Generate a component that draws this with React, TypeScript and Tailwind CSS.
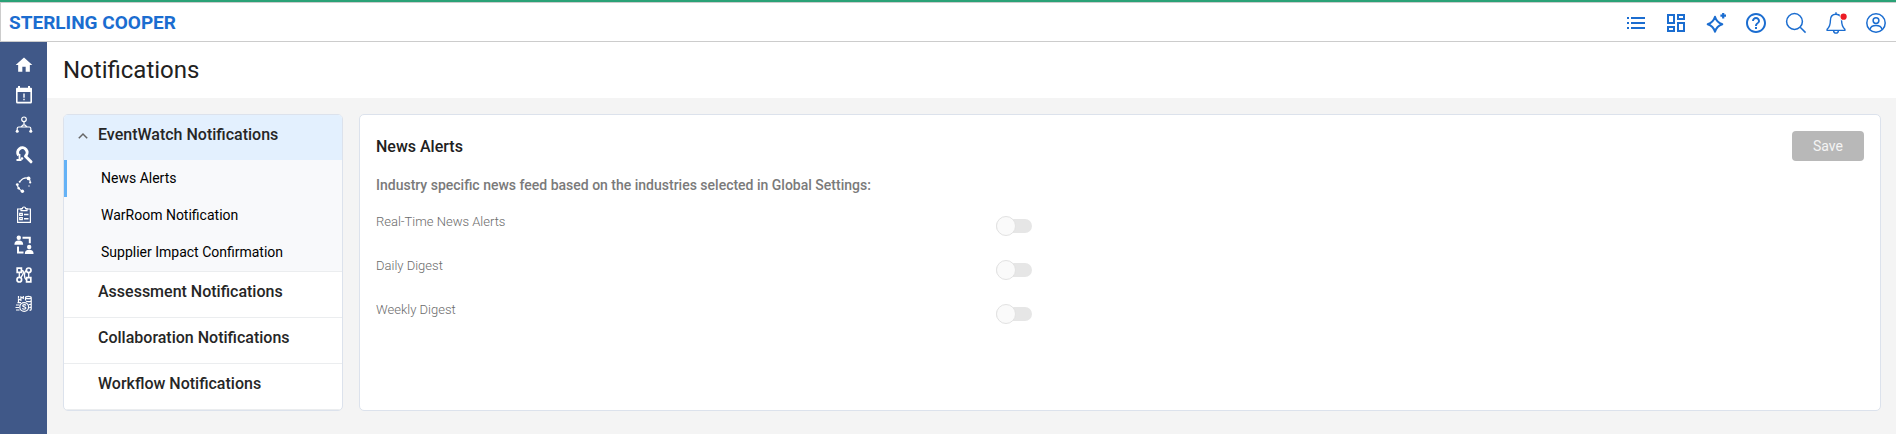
import type { ReactNode } from "react";
import { MdHelpOutline, MdHome, MdOutlineDashboard } from "react-icons/md";

const topLinks: { label: string; icon: ReactNode }[] = [
  {
    label: "Lists",
    icon: (
      <svg viewBox="0 0 24 24" className="size-6" fill="currentColor">
        <path d="M3 6h2v2H3zM7 6h14v2H7zM3 11h2v2H3zM7 11h14v2H7zM3 16h2v2H3zM7 16h14v2H7z" />
      </svg>
    ),
  },
  { label: "Dashboard", icon: <MdOutlineDashboard className="size-6" /> },
  {
    label: "Assistant",
    icon: (
      <svg viewBox="0 0 24 24" className="size-6" fill="none" stroke="currentColor" strokeWidth="2" strokeLinejoin="round">
        <path d="M11 5.800c1.300 4.400 3 6.100 7.300 7.500-4.300 1.400-6 3.100-7.300 7.500-1.300-4.400-3-6.100-7.300-7.500C8 11.900 9.700 10.200 11 5.800z" />
        <path d="M19.200 1.900v5.600M16.400 4.700h5.600" strokeWidth="2.200" />
      </svg>
    ),
  },
  { label: "Help", icon: <MdHelpOutline className="size-6" /> },
  {
    label: "Search",
    icon: (
      <svg viewBox="0 0 24 24" className="size-6" fill="none" stroke="currentColor" strokeWidth="1.5">
        <circle cx="10.5" cy="10.5" r="7.900" />
        <path d="M16.200 16.200l5.400 5.400" />
      </svg>
    ),
  },
  {
    label: "Alerts",
    icon: (
      <svg viewBox="0 0 24 24" className="size-6" fill="none" stroke="currentColor" strokeWidth="1.4" strokeLinejoin="round">
        <path d="M12 3.200c-3.600 0-5.600 2.700-5.600 6.200 0 4.600-.8 6.600-3.300 8.800v1.200h17.800v-1.200c-2.500-2.200-3.300-4.200-3.300-8.800 0-3.500-2-6.200-5.600-6.200z" />
        <path d="M12 1.200v2M9.600 19.600c.1 1.500 1.100 2.500 2.400 2.500s2.300-1 2.400-2.500" />
        <circle cx="19.600" cy="5.700" r="4" fill="#fff" stroke="none" />
        <circle cx="19.600" cy="5.700" r="3.100" fill="#ec1c24" stroke="none" />
      </svg>
    ),
  },
  {
    label: "Account",
    icon: (
      <svg viewBox="0 0 24 24" className="size-6" fill="none" stroke="currentColor" strokeWidth="1.5">
        <circle cx="12" cy="12" r="9.200" />
        <circle cx="12" cy="9.600" r="2.900" />
        <path d="M6 18.500c.6-2.600 2.800-3.900 6-3.900s5.400 1.300 6 3.900" />
      </svg>
    ),
  },
];

const sideLinks: { label: string; icon: ReactNode }[] = [
  { label: "Home", icon: <MdHome className="size-5" /> },
  {
    label: "Events",
    icon: (
      <svg viewBox="0 0 20 20" className="size-5" fill="currentColor" fillRule="evenodd">
        <path d="M4 1h2v1.700h8V1h2v1.700h1a1 1 0 0 1 1 1V17a1.500 1.500 0 0 1-1.500 1.500h-13A1.500 1.500 0 0 1 2 17V3.700a1 1 0 0 1 1-1h1zM3.600 7v9.800h12.800V7zM9.300 8.500h1.400v4.200H9.300zM9.300 13.800h1.400v1.400H9.300z" />
      </svg>
    ),
  },
  {
    label: "Supply map",
    icon: (
      <svg viewBox="0 0 20 20" className="size-5" fill="none" stroke="currentColor" strokeWidth="1.200">
        <circle cx="10" cy="4.300" r="2.300" />
        <path d="M10 6.600v3M3.200 15.800v-2.300c0-1 .5-1.500 1.600-1.500h1.700c1.200 0 1.600-2.200 3.500-2.200s2.300 2.200 3.500 2.200h1.700c1.100 0 1.600.5 1.600 1.500v2.300M6.500 12h7" />
        <g fill="currentColor" stroke="none">
          <circle cx="3.200" cy="16.300" r="1.500" />
          <circle cx="16.800" cy="16.300" r="1.500" />
        </g>
      </svg>
    ),
  },
  {
    label: "Discovery",
    icon: (
      <svg viewBox="0 0 20 20" className="size-5" fill="none" stroke="currentColor">
        <path d="M4.600 10.300A4.700 4.700 0 1 1 11.500 11" strokeWidth="3" />
        <path d="M11.500 11.200l5.500 5.600" strokeWidth="3" strokeLinecap="round" />
        <path d="M5.500 9v5.500M2.500 15h5" strokeWidth="1.800" />
        <circle cx="8" cy="13.500" r="1.300" fill="currentColor" stroke="none" />
      </svg>
    ),
  },
  {
    label: "Resiliency",
    icon: (
      <svg viewBox="0 0 20 20" className="size-5" fill="none" stroke="currentColor" strokeWidth="1.200">
        <path d="M6 6.500C8 3.800 11.500 2.300 14.500 3.300M15.300 4c.8 1.300 1 2.300.9 3.500M3.400 9.500c.1 1.400.5 2.500 1.200 3.600M5 13.500c.8 1.100 1.700 1.900 3 2.500" />
        <g fill="currentColor" stroke="none">
          <circle cx="5.700" cy="6.800" r="1" />
          <circle cx="14.600" cy="3.400" r="1.900" />
          <circle cx="16.200" cy="7.500" r="1.100" />
          <circle cx="3.300" cy="9.600" r="1.400" />
          <circle cx="4.700" cy="13.300" r="1.200" />
          <circle cx="8.400" cy="16.200" r="1.700" />
          <circle cx="15" cy="11" r=".7" />
        </g>
      </svg>
    ),
  },
  {
    label: "Assessments",
    icon: (
      <svg viewBox="0 0 20 20" className="size-5" fill="none" stroke="currentColor" strokeWidth="1.200">
        <path d="M7 4H3.600v13.400h12.800V4H13" />
        <path d="M7 3.600h1.400a1.600 1.600 0 0 1 3.200 0H13v2H7z" />
        <path d="M5.700 8.400h2.600v2H5.700zM5.700 12.700h2.600v2H5.700z" />
        <path d="M10 9.400h4.500M10 13.700h4.500" strokeWidth="1.500" />
      </svg>
    ),
  },
  {
    label: "Collaboration",
    icon: (
      <svg viewBox="0 0 20 20" className="size-5" fill="currentColor">
        <circle cx="4.800" cy="2.700" r="2.200" />
        <path d="M.4 9.800C.4 7 2 5.600 4.800 5.600S9.200 7 9.200 9.800z" />
        <circle cx="15.200" cy="12" r="2.200" />
        <path d="M10.800 19c0-2.800 1.600-4.200 4.400-4.200s4.400 1.400 4.400 4.200z" />
        <path d="M8.500 2.800h7.300v5.500M4 11.500v6h5.500" fill="none" stroke="currentColor" strokeWidth="2" />
      </svg>
    ),
  },
  {
    label: "Workflows",
    icon: (
      <svg viewBox="0 0 20 20" className="size-5" fill="none" stroke="currentColor" strokeWidth="1.700">
        <path d="M3.200 3.200h4.200v4.200H3.200z" />
        <circle cx="14.700" cy="5.300" r="2.300" />
        <circle cx="5.300" cy="14.700" r="2.300" />
        <path d="M12.600 12.600h4.200v4.200h-4.200z" />
        <path d="M5.300 7.400v5M14.700 7.600v5M7.400 5.500c3 0 2 3 1 4.700l-1.600 2.500M12.400 5.700c-3 1.500-2.200 8.500.2 9" strokeWidth="1.300" />
      </svg>
    ),
  },
  {
    label: "Spend",
    icon: (
      <svg viewBox="0 0 20 20" className="size-5" fill="none" stroke="currentColor" strokeWidth="1.200">
        <path d="M4.500 7.500V4l2.400 1.300V2l2.400 1.300V1M4.500 3V1M11.500 2.500c0-.8 1.200-1.200 2.800-1.200s2.900.4 2.900 1.200v11.700c0 .6-.6 1-1.600 1.200M11.500 2.500v3M11.500 2.500c0 .8 1.200 1.200 2.800 1.200s2.900-.4 2.900-1.200M12 6.300c.6.300 1.400.4 2.300.4 1.600 0 2.900-.4 2.900-1.200M14.600 9.700c1.500 0 2.600-.4 2.600-1.100M15.200 12.600c1.200-.1 2-.5 2-1.100M3.500 7.700H7M2 10h3.500M1.500 12.500H5M2 15h3.500" />
        <circle cx="10.200" cy="12" r="4.400" />
        <path d="M11.900 10.500c-.3-.6-.9-.8-1.700-.8-.9 0-1.500.4-1.500 1 0 1.700 3.200.7 3.200 2.400 0 .7-.7 1.100-1.700 1.100-.8 0-1.500-.3-1.800-1" />
      </svg>
    ),
  },
];

const eventWatchItems = ["News Alerts", "WarRoom Notification", "Supplier Impact Confirmation"];
const otherGroups = ["Assessment Notifications", "Collaboration Notifications", "Workflow Notifications"];
const feeds = [
  { id: "real-time", label: "Real-Time News Alerts" },
  { id: "daily", label: "Daily Digest" },
  { id: "weekly", label: "Weekly Digest" },
];

function Header() {
  return (
    <header className="border-t-2 border-[#2aa277]">
      <div className="flex h-10 items-center justify-between border-y border-l border-[#cccccc] bg-white px-2 pt-[2px]">
        <a href="#home" className="text-[19px] font-bold text-[#1b6dd0]">
          STERLING COOPER
        </a>
        <nav aria-label="Tools" className="flex gap-4 text-[#1b6dd0]">
          {topLinks.map((link) => (
            <button key={link.label} type="button" aria-label={link.label}>
              {link.icon}
            </button>
          ))}
        </nav>
      </div>
    </header>
  );
}

function Sidebar() {
  return (
    <nav aria-label="Main" className="flex w-[47px] shrink-0 flex-col items-center gap-[10px] bg-[#405888] pt-[13px] text-white">
      {sideLinks.map((link) => (
        <a key={link.label} href="#section" aria-label={link.label}>
          {link.icon}
        </a>
      ))}
    </nav>
  );
}

function NotificationMenu() {
  return (
    <nav
      aria-label="Notification types"
      className="w-[280px] shrink-0 overflow-hidden rounded-[5px] border border-[#dce2ec] bg-white"
    >
      <div className="border-b border-[#ebedef] bg-[#f8f9fb]">
        <button
          type="button"
          aria-expanded="true"
          className="flex h-[45px] w-full items-start bg-[#e3f0fe] pt-2 pl-[14px] text-left text-base font-medium text-[#262626]"
        >
          <svg viewBox="0 0 10 24" className="mr-[10px] h-6 w-[10px]" fill="none" stroke="#666" strokeWidth="1.500">
            <path d="M.8 15.200L5 11l4.200 4.200" />
          </svg>
          EventWatch Notifications
        </button>
        <ul>
          {eventWatchItems.map((item, index) => (
            <li key={item}>
              <a
                href="#item"
                aria-current={index === 0 ? "page" : undefined}
                className={`flex h-[37px] items-center border-l-[3px] pb-[2px] pl-[34px] text-sm text-black ${
                  index === 0 ? "border-[#64b2f6]" : "border-transparent"
                }`}
              >
                {item}
              </a>
            </li>
          ))}
        </ul>
      </div>
      {otherGroups.map((group) => (
        <button
          key={group}
          type="button"
          className="flex h-[46px] w-full items-start border-b border-[#ebedef] pt-2 pl-[34px] text-left text-base font-medium text-[#262626]"
        >
          {group}
        </button>
      ))}
    </nav>
  );
}

function NewsAlerts() {
  return (
    <section className="min-w-0 flex-1 rounded-[5px] border border-[#dce2ec] bg-white p-4">
      <div className="flex items-center justify-between">
        <h2 className="pt-[2px] text-base font-medium text-[#212121]">News Alerts</h2>
        <button type="button" disabled className="h-[30px] w-[72px] rounded-[4px] bg-[#b8b8b8] text-sm text-[#f4f4f4]">
          Save
        </button>
      </div>
      <p className="mt-[14px] text-sm font-medium text-[#7a7a7a]">
        Industry specific news feed based on the industries selected in Global Settings:
      </p>
      <div className="mt-4">
        {feeds.map((feed) => (
          <div key={feed.id} className="grid h-11 grid-cols-12 items-start">
            <label htmlFor={feed.id} className="col-span-5 text-[13px] leading-[22px] font-light text-[#6b6b6b]">
              {feed.label}
            </label>
            <input
              id={feed.id}
              type="checkbox"
              role="switch"
              disabled
              className="mt-2 flex h-[14px] w-9 appearance-none items-center rounded-full bg-[#e6e6e6] before:size-5 before:shrink-0 before:rounded-full before:border before:border-[#e2e2e2] before:bg-[#fafafa] before:content-['']"
            />
          </div>
        ))}
      </div>
    </section>
  );
}

export default function App() {
  return (
    <div className="flex min-h-screen flex-col bg-[#f4f4f4] font-[Roboto,sans-serif]">
      <Header />
      <div className="flex flex-1">
        <Sidebar />
        <main className="min-w-0 flex-1">
          <div className="flex h-14 items-center bg-white px-4">
            <h1 className="text-2xl text-[#212121]">Notifications</h1>
          </div>
          <div className="flex gap-4 py-4 pr-[15px] pl-4">
            <NotificationMenu />
            <NewsAlerts />
          </div>
        </main>
      </div>
    </div>
  );
}
